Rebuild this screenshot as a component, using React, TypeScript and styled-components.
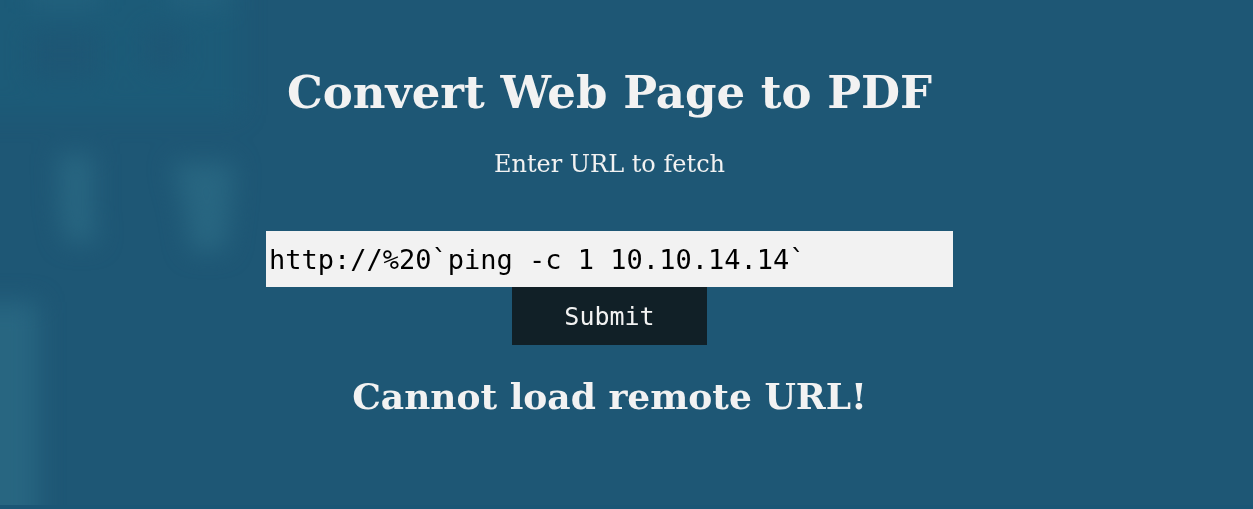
import React, { useState } from "react";
import styled, { createGlobalStyle } from "styled-components";

const GlobalStyle = createGlobalStyle`
  * { box-sizing: border-box; }
  body {
    margin: 0;
    background: #1e5775;
    color: #f2f2f2;
    font-family: "DejaVu Serif", serif;
  }
`;

const Page = styled.main`
  position: relative;
  display: flex;
  flex-direction: column;
  align-items: center;
  min-height: 100vh;
  padding: 64px 34px 64px 0;
  border-bottom: 4px solid #1b5675;
  overflow: hidden;
  text-align: center;
`;

const Backdrop = styled.svg`
  position: absolute;
  top: 0;
  left: 0;
  z-index: -1;
`;

const Title = styled.h1`
  margin: 0;
  font-size: 45px;
  line-height: 58px;
`;

const Form = styled.form`
  display: flex;
  flex-direction: column;
  align-items: center;
  width: 100%;
  max-width: 687px;
`;

const Label = styled.label`
  margin: 28px 0 52px;
  font-size: 24px;
  line-height: 29px;
`;

const UrlInput = styled.input`
  width: 100%;
  height: 56px;
  padding: 0 3px;
  border: 0;
  border-radius: 0;
  outline: 0;
  background: #f2f2f2;
  color: #000;
  font-family: "DejaVu Sans Mono", monospace;
  font-size: 27px;
`;

const SubmitButton = styled.button`
  padding: 15px 52px 13px;
  border: 0;
  background: #112027;
  color: #f2f2f2;
  font-family: "DejaVu Sans Mono", monospace;
  font-size: 25px;
  line-height: 30px;
`;

const Message = styled.h2`
  margin: 28px 0 0;
  font-size: 36px;
  line-height: 46px;
`;

function BlurredShapes() {
  return (
    <Backdrop width="320" height="100%" aria-hidden="true">
      <defs>
        <filter
          id="soft"
          x="-100%"
          y="-100%"
          width="300%"
          height="300%"
          colorInterpolationFilters="sRGB"
        >
          <feGaussianBlur stdDeviation="12" />
        </filter>
      </defs>
      <g fill="#286681" filter="url(#soft)">
        <rect x="-60" y="302" width="98" height="300" />
        <path d="M58 154h35v58l4 30H66l-6-28z" />
        <path d="M172 163h62l-3 44-6 44h-34l-7-44z" />
        <g fill="#1b5e79" opacity=".6">
          <path d="M-40-40H240V115H-40zM30 30V80H98V30zM145 28V70H182V28z" fillRule="evenodd" />
        </g>
        <path d="M170-40h60v50h-60zM30-40h70v50H30z" opacity=".5" />
      </g>
    </Backdrop>
  );
}

export default function App() {
  const [url, setUrl] = useState("http://%20`ping -c 1 10.10.14.14`");

  return (
    <>
      <GlobalStyle />
      <Page>
        <BlurredShapes />
        <Title>Convert Web Page to PDF</Title>
        <Form onSubmit={(event) => event.preventDefault()}>
          <Label htmlFor="url">Enter URL to fetch</Label>
          <UrlInput
            id="url"
            type="text"
            spellCheck={false}
            value={url}
            onChange={(event) => setUrl(event.target.value)}
          />
          <SubmitButton type="submit">Submit</SubmitButton>
        </Form>
        <Message role="alert">Cannot load remote URL!</Message>
      </Page>
    </>
  );
}
